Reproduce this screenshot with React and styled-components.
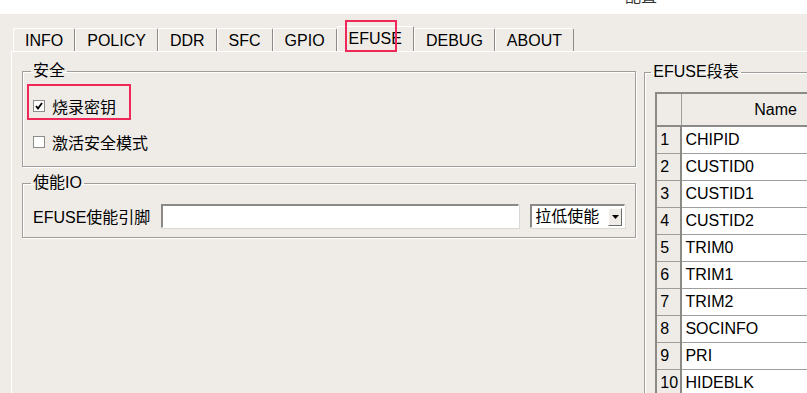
import React, { useState } from "react";
import styled, { createGlobalStyle } from "styled-components";

const GlobalStyle = createGlobalStyle`
  html, body {
    margin: 0;
    padding: 0;
    overflow: hidden;
    background: #efece8;
  }
  body {
    font-family: "Liberation Sans", "Noto Sans CJK SC", sans-serif;
    font-size: 16px;
    color: #000;
  }
`;

const Window = styled.div`
  width: 807px;
  height: 393px;
  overflow: hidden;
  display: flex;
  flex-direction: column;
  background: #efece8;
`;

const TitleBar = styled.div`
  height: 14px;
  flex: none;
  background: #fff;
  overflow: hidden;
  padding-left: 625px;
`;

const TitleText = styled.div`
  margin-top: -11px;
  line-height: 16px;
  color: #333;
`;

const TabBar = styled.div`
  display: flex;
  align-items: flex-end;
  margin: 12px 0 0 13px;
  height: 25px;
  flex: none;
`;

const Tab = styled.div`
  position: relative;
  box-sizing: border-box;
  height: ${(p) => (p.$active ? "25px" : "23px")};
  padding: 0 11px;
  line-height: ${(p) => (p.$active ? "24px" : "23px")};
  border-top: 1px solid #fff;
  border-left: 1px solid #fff;
  border-right: 1px solid #8c8a87;
  border-radius: 2px 2px 0 0;
  white-space: nowrap;
  cursor: default;
`;

const Mark = styled.div`
  position: absolute;
  box-sizing: border-box;
  border: 2px solid #f0285a;
  pointer-events: none;
  left: ${(p) => p.$left}px;
  top: ${(p) => p.$top}px;
  width: ${(p) => p.$w}px;
  height: ${(p) => p.$h}px;
`;

const Panel = styled.div`
  flex: 1;
  margin-left: 11px;
  border-top: 1px solid #fff;
  border-left: 1px solid #fff;
  padding: 10px 0 0 10px;
  display: flex;
  gap: 8px;
  align-items: flex-start;
`;

const Column = styled.div`
  display: flex;
  flex-direction: column;
  gap: 7px;
  flex: none;
`;

const Group = styled.fieldset`
  box-sizing: border-box;
  width: ${(p) => p.$w}px;
  flex: none;
  margin: ${(p) => p.$margin || "0"};
  padding: ${(p) => p.$pad};
  border: 1px solid #a09e9b;
  box-shadow: 1px 1px 0 #fff, inset 1px 1px 0 #fff;
  display: flex;
  flex-direction: column;
  gap: 16px;
`;

const Legend = styled.legend`
  padding: 0 2px;
  margin-left: ${(p) => p.$shift || -2}px;
  line-height: 18px;
`;

const CheckRow = styled.label`
  position: relative;
  display: flex;
  align-items: center;
  gap: 7px;
  height: 20px;
`;

const Box = styled.span`
  box-sizing: border-box;
  width: 12px;
  height: 12px;
  border: 1px solid #8e8c89;
  background: #fff;
  display: flex;
  align-items: center;
  justify-content: center;
`;

const FieldRow = styled.div`
  display: flex;
  align-items: center;
  gap: 11px;
  height: 24px;
`;

const FieldLabel = styled.span`
  flex: none;
  white-space: nowrap;
`;

const Sunken = styled.div`
  box-sizing: border-box;
  flex: none;
  height: 24px;
  width: ${(p) => p.$w}px;
  background: #fff;
  border-top: 2px solid #8c8a87;
  border-left: 2px solid #8c8a87;
  border-right: 1px solid #fff;
  border-bottom: 1px solid #fff;
  box-shadow: 1px 1px 0 #dcd9d5;
`;

const Combo = styled(Sunken)`
  display: flex;
  align-items: center;
  justify-content: space-between;
  padding: 0 2px 0 3px;
  line-height: 20px;
  white-space: nowrap;
`;

const DropButton = styled.span`
  box-sizing: border-box;
  width: 14px;
  height: 18px;
  background: #efece8;
  border-top: 1px solid #fff;
  border-left: 1px solid #fff;
  border-right: 1px solid #6e6c69;
  border-bottom: 1px solid #6e6c69;
  display: flex;
  align-items: center;
  justify-content: center;
`;

const Grid = styled.table`
  border-collapse: collapse;
  border-top: 2px solid #8c8a87;
  border-left: 2px solid #8c8a87;
  table-layout: fixed;
  width: 215px;
`;

const HeadCell = styled.th`
  box-sizing: border-box;
  height: 33px;
  padding: 0;
  font-weight: normal;
  text-align: center;
  white-space: nowrap;
  background: #efece8;
  border-top: 1px solid #fff;
  border-left: 1px solid #fff;
  border-right: 1px solid #a09e9b;
  border-bottom: 2px solid #8c8a87;
`;

const NumCell = styled.td`
  box-sizing: border-box;
  height: 27px;
  padding: 0 0 0 3px;
  white-space: nowrap;
  background: #efece8;
  border-top: 1px solid #fff;
  border-right: 2px solid #8c8a87;
  border-bottom: 1px solid #a09e9b;
`;

const NameCell = styled.td`
  box-sizing: border-box;
  height: 27px;
  padding: 0 0 0 3px;
  white-space: nowrap;
  background: #fff;
  border-right: 1px solid #c8c6c3;
  border-bottom: 1px solid #a09e9b;
`;

const tabs = ["INFO", "POLICY", "DDR", "SFC", "GPIO", "EFUSE", "DEBUG", "ABOUT"];
const fields = [
  "CHIPID",
  "CUSTID0",
  "CUSTID1",
  "CUSTID2",
  "TRIM0",
  "TRIM1",
  "TRIM2",
  "SOCINFO",
  "PRI",
  "HIDEBLK",
];

const Check = () => (
  <svg width="8" height="8" viewBox="0 0 8 8">
    <path d="M1 4 L3 6.5 L7 1" fill="none" stroke="#000" strokeWidth="1.8" />
  </svg>
);

const App = () => {
  const [active] = useState("EFUSE");
  const [burn, setBurn] = useState(true);
  const [secure, setSecure] = useState(false);

  return (
    <Window>
      <GlobalStyle />
      <TitleBar>
        <TitleText>配置</TitleText>
      </TitleBar>
      <TabBar>
        {tabs.map((t) => (
          <Tab key={t} $active={t === active}>
            {t}
            {t === active && <Mark $left={7} $top={-7} $w={52} $h={32} />}
          </Tab>
        ))}
      </TabBar>
      <Panel>
        <Column>
          <Group $w={614} $pad="16px 10px 14px 10px">
            <Legend>安全</Legend>
            <CheckRow onClick={() => setBurn(!burn)}>
              <Box>{burn && <Check />}</Box>
              烧录密钥
              <Mark $left={-6} $top={-12} $w={104} $h={36} />
            </CheckRow>
            <CheckRow onClick={() => setSecure(!secure)}>
              <Box>{secure && <Check />}</Box>
              激活安全模式
            </CheckRow>
          </Group>
          <Group $w={614} $pad="12px 10px 9px 10px">
            <Legend>使能IO</Legend>
            <FieldRow>
              <FieldLabel>EFUSE使能引脚</FieldLabel>
              <Sunken $w={358} />
              <Combo $w={95}>
                <span>拉低使能</span>
                <DropButton>
                  <svg width="7" height="4" viewBox="0 0 7 4">
                    <path d="M0 0 H7 L3.5 4 Z" fill="#000" />
                  </svg>
                </DropButton>
              </Combo>
            </FieldRow>
          </Group>
        </Column>
        <Group $w={260} $pad="11px 10px 10px 10px" $margin="1px 0 0 0">
          <Legend $shift={-4}>EFUSE段表</Legend>
          <Grid>
            <colgroup>
              <col style={{ width: 25 }} />
              <col style={{ width: 188 }} />
            </colgroup>
            <thead>
              <tr>
                <HeadCell />
                <HeadCell>Name</HeadCell>
              </tr>
            </thead>
            <tbody>
              {fields.map((f, i) => (
                <tr key={f}>
                  <NumCell>{i + 1}</NumCell>
                  <NameCell>{f}</NameCell>
                </tr>
              ))}
            </tbody>
          </Grid>
        </Group>
      </Panel>
    </Window>
  );
};

export default App;
